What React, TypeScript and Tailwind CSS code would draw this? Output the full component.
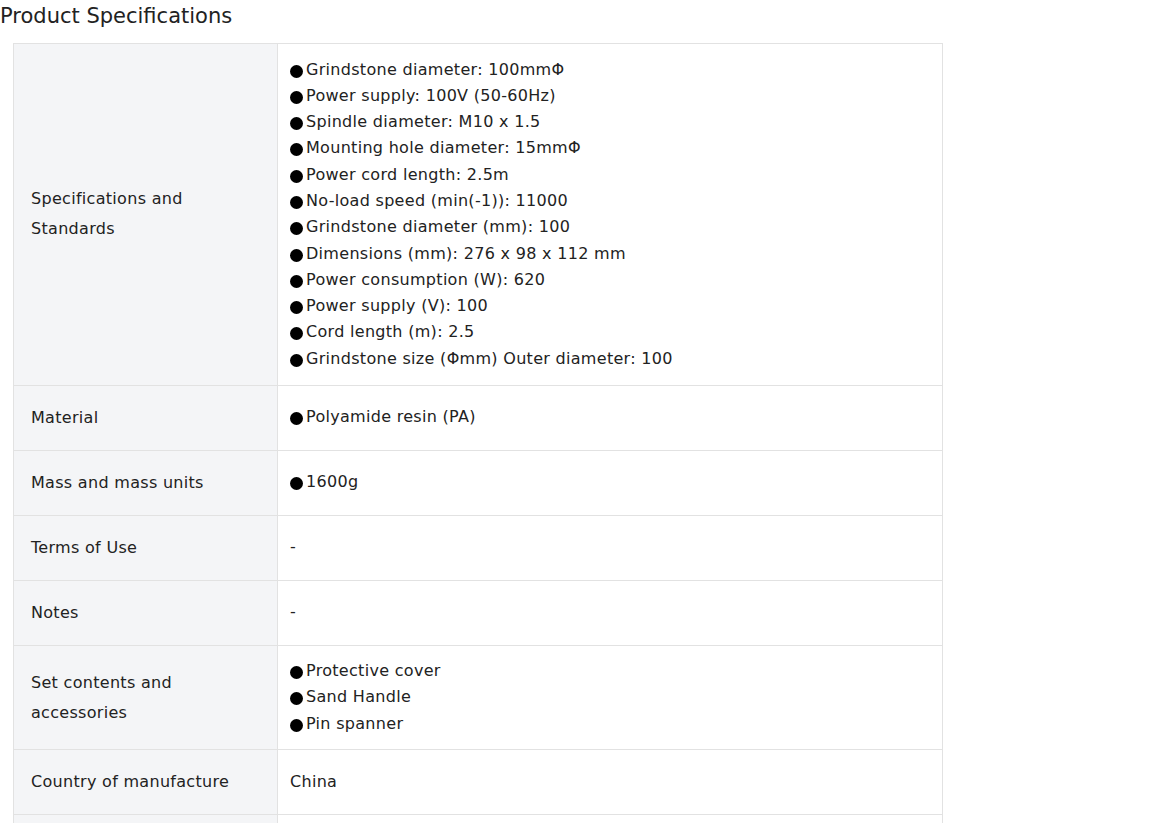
import React from "react";

const specs = [
  "Grindstone diameter: 100mmΦ",
  "Power supply: 100V (50-60Hz)",
  "Spindle diameter: M10 x 1.5",
  "Mounting hole diameter: 15mmΦ",
  "Power cord length: 2.5m",
  "No-load speed (min(-1)): 11000",
  "Grindstone diameter (mm): 100",
  "Dimensions (mm): 276 x 98 x 112 mm",
  "Power consumption (W): 620",
  "Power supply (V): 100",
  "Cord length (m): 2.5",
  "Grindstone size (Φmm) Outer diameter: 100",
];

type Row = { label: string; lines: string[]; bullet: boolean };

const rows: Row[] = [
  { label: "Specifications and Standards", lines: specs, bullet: true },
  { label: "Material", lines: ["Polyamide resin (PA)"], bullet: true },
  { label: "Mass and mass units", lines: ["1600g"], bullet: true },
  { label: "Terms of Use", lines: ["-"], bullet: false },
  { label: "Notes", lines: ["-"], bullet: false },
  { label: "Set contents and accessories", lines: ["Protective cover", "Sand Handle", "Pin spanner"], bullet: true },
  { label: "Country of manufacture", lines: ["China"], bullet: false },
  { label: "\u00a0", lines: ["\u00a0"], bullet: false },
];

export default function App() {
  return (
    <div className="bg-white text-[#222] h-[823px] overflow-hidden" style={{ fontFamily: '"DejaVu Sans", "Noto Sans CJK JP", sans-serif' }}>
      <h2 className="text-[21px] leading-[32px] font-normal text-[#222]">Product Specifications</h2>
      <table className="ml-[13px] mt-[11px] w-[930px] border-collapse border border-[#e2e2e2] text-[16px] tracking-[0.3px]">
        <tbody>
          {rows.map((r, i) => (
            <tr key={i} className="border-b border-[#e2e2e2]">
              <th className="w-[264px] bg-[#f4f5f7] border-r border-[#e2e2e2] text-left font-normal align-middle pl-[17px] pr-[32px] py-[17px] leading-[30px] text-[#222]">
                {r.label}
              </th>
              <td className="align-middle pl-[12px] pr-4 py-[12.5px] leading-[26.3px] text-[#222]">
                {r.lines.map((l, j) => (
                  <div key={j} className="whitespace-nowrap">
                    {r.bullet && (
                      <span className="inline-block w-[13px] h-[13px] rounded-full bg-black mr-[3px] align-[-3px]" />
                    )}
                    {l}
                  </div>
                ))}
              </td>
            </tr>
          ))}
        </tbody>
      </table>
    </div>
  );
}
